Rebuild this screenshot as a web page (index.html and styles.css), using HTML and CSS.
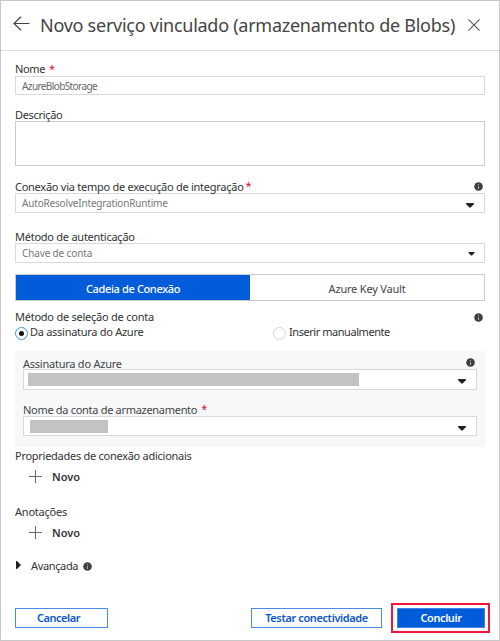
FILE: index.html
```html
<!DOCTYPE html>
<html lang="pt">
<head>
<meta charset="utf-8">
<title>Novo serviço vinculado</title>
<link rel="stylesheet" href="styles.css">
</head>
<body>
<svg width="0" height="0" class="defs">
  <symbol id="info" viewBox="0 0 9 9"><circle cx="4.5" cy="4.5" r="4.3" fill="#3f3f3f"/><path d="M4 4h1v3H4zM4 2h1v1H4z" fill="#aaa"/></symbol>
  <symbol id="caret" viewBox="0 0 8 5"><path d="M0 0h8v1L4.6 4.5H3.4L0 1z" fill="#222"/></symbol>
  <symbol id="plus" viewBox="0 0 13 13"><path d="M6.5 0v13M0 6.5h13" stroke="#666" fill="none"/></symbol>
</svg>
<main class="dialog">
  <header class="header">
    <svg class="back" viewBox="0 0 17 15"><path d="M16.5 7.5H1M8 .7L1 7.5l7 6.8" fill="none" stroke="#444" stroke-width="1.2"/></svg>
    <h1 class="title"><span class="t-title">Novo serviço vinculado (armazenamento de Blobs)</span></h1>
    <svg class="close" viewBox="0 0 12 12"><path d="M.4.4l11.2 11.2M11.6.4L.4 11.6" fill="none" stroke="#555" stroke-width="1.1"/></svg>
  </header>
  <div class="content">
    <div class="label first"><span class="t-nome">Nome</span><b class="req">*</b></div>
    <div class="box name"><span class="t-blob">AzureBlobStorage</span></div>
    <div class="label desc"><span class="t-desc">Descrição</span></div>
    <div class="box area"></div>
    <div class="label conn"><span class="t-conn">Conexão via tempo de execução de integração</span><b class="req near">*</b><svg class="info"><use href="#info"/></svg></div>
    <div class="box"><span class="t-auto">AutoResolveIntegrationRuntime</span><svg class="caret low"><use href="#caret"/></svg></div>
    <div class="label auth"><span class="t-auth">Método de autenticação</span></div>
    <div class="box"><span class="t-chave">Chave de conta</span><svg class="caret small" viewBox="0 0 8 5"><use href="#caret" width="8" height="5"/></svg></div>
    <div class="tabs">
      <div class="tab active"><span class="t-cadeia">Cadeia de Conexão</span></div>
      <div class="tab"><span class="t-vault">Azure Key Vault</span></div>
    </div>
    <div class="label select"><span class="t-sel">Método de seleção de conta</span><svg class="info"><use href="#info"/></svg></div>
    <div class="radios">
      <div class="choice"><i class="radio on"></i><span class="t-da">Da assinatura do Azure</span></div>
      <div class="choice"><i class="radio"></i><span class="t-inserir">Inserir manualmente</span></div>
    </div>
    <section class="group">
      <div class="label sub"><span class="t-assin">Assinatura do Azure</span><svg class="info"><use href="#info"/></svg></div>
      <div class="box tall"><i class="mask long"></i><svg class="caret low"><use href="#caret"/></svg></div>
      <div class="label account"><span class="t-conta">Nome da conta de armazenamento</span><b class="req">*</b></div>
      <div class="box"><i class="mask short"></i><svg class="caret mid"><use href="#caret"/></svg></div>
    </section>
    <div class="label props"><span class="t-props">Propriedades de conexão adicionais</span></div>
    <div class="add"><svg class="plus"><use href="#plus"/></svg><span class="t-novo">Novo</span></div>
    <div class="label notes"><span class="t-anot">Anotações</span></div>
    <div class="add tight"><svg class="plus"><use href="#plus"/></svg><span class="t-novo">Novo</span></div>
    <div class="label advanced"><svg class="expand" viewBox="0 0 5 8"><path d="M0 0h1l4 4-4 4H0z" fill="#222"/></svg><span class="t-avan">Avançada</span><svg class="info inline"><use href="#info"/></svg></div>
  </div>
  <footer class="footer">
    <button class="btn cancel"><span class="t-cancel">Cancelar</span></button>
    <button class="btn test"><span class="t-test">Testar conectividade</span></button>
    <div class="highlight"><button class="btn primary"><span class="t-concluir">Concluir</span></button></div>
  </footer>
</main>
</body>
</html>
```
FILE: styles.css
```css
* { box-sizing: border-box; }
body { margin: 0; background: #fff; font-family: "Noto Sans", "Open Sans", sans-serif; font-size: 11px; color: #333; }
.defs { position: absolute; }
svg { display: block; flex: none; }
span { white-space: nowrap; }
.dialog { width: 500px; height: 641px; border: 1px solid #c8c8c8; display: flex; flex-direction: column; }
.header { height: 50px; flex: none; border-bottom: 1px solid #ddd; display: flex; align-items: center; padding: 0 19px 2px 12px; }
.back { width: 17px; height: 15px; margin-top: -2px; }
.title { flex: 1; margin: 0 0 0 10px; font-size: 18px; line-height: 24px; font-weight: 400; color: #444; }
.close { width: 12px; height: 12px; }
.content { padding: 0 14px; flex: 1; }
.label { display: flex; align-items: center; height: 14px; line-height: 14px; }
.first { margin-top: 11px; }
.desc { margin-top: 12px; }
.conn { margin-top: 13px; }
.auth { margin-top: 16px; }
.desc span, .conn span, .auth span, .account span, .props span { margin-top: 2px; }
.sub span { margin-top: 3px; }
.req { color: #d0142c; font-weight: 400; margin-left: 4px; }
.near { margin-left: 2px; }
.info { width: 9px; height: 9px; margin: 0 2px 0 auto; }
.info.inline { margin: 0 0 0 5px; }
.box { height: 20px; border: 1px solid #d9d9d9; background: #fff; display: flex; align-items: center; padding: 0 10px 0 6px; font-size: 10px; line-height: 14px; color: #777; }
.box.name { height: 19px; color: #666; }
.box.area { height: 45px; border-color: #ccc; }
.box.tall { height: 21px; }
.caret { width: 8px; height: 5px; margin-left: auto; }
.caret.low { margin-top: 4px; }
.caret.mid { margin-top: 5px; }
.caret.small { width: 7px; height: 4px; margin-top: 2px; margin-right: -1px; }
.tabs { display: flex; height: 27px; margin-top: 11px; border: 1px solid #ccc; }
.tab { flex: 1; display: flex; align-items: center; justify-content: center; padding-top: 2px; color: #444; }
.active { background: #015cda; color: #fff; font-weight: 500; }
.select { margin-top: 9px; }
.radios { display: flex; height: 15px; margin-top: 1px; }
.choice { width: 258px; flex: none; display: flex; align-items: center; gap: 2px; line-height: 14px; }
.choice span { margin-top: -2px; }
.choice + .choice { width: auto; gap: 3px; }
.radio { width: 13px; height: 13px; flex: none; border: 1px solid #d5d5d5; border-radius: 50%; margin-top: 2px; display: flex; align-items: center; justify-content: center; }
.on { border-color: #3a96dd; }
.on::after { content: ""; width: 5px; height: 5px; border-radius: 50%; background: #111; }
.group { margin-top: 11px; height: 96px; background: #f7f8fa; padding: 4px 8px 0; color: #444; }
.account { margin-top: 12px; }
.mask { height: 13px; background: #c3c3c3; flex: none; }
.long { width: 331px; margin-left: -2px; margin-top: -1px; }
.short { width: 78px; }
.props { margin-top: 1px; }
.add { display: flex; align-items: center; height: 16px; margin-top: 6px; padding-left: 14px; gap: 10px; font-weight: 600; }
.add.tight { margin-top: 5px; }
.plus { width: 13px; height: 13px; }
.notes { margin-top: 21px; }
.advanced { margin-top: 19px; }
.expand { width: 5px; height: 8px; margin: 0 10px 2px 1px; }
.footer { flex: none; height: 37px; display: flex; align-items: flex-start; padding: 0 9px 0 14px; }
.btn { font: 600 11px/14px "Noto Sans", "Open Sans", sans-serif; height: 20px; padding: 0; background: #fff; border: 1px solid #4a8ae6; color: #0b55cf; display: flex; justify-content: center; align-items: center; margin-top: 5px; }
.cancel { width: 93px; padding-right: 6px; }
.test { width: 131px; margin-left: auto; }
.highlight { width: 99px; height: 30px; margin-left: 9px; border: 2px solid #f4143c; display: flex; justify-content: center; }
.primary { width: 88px; margin-top: 3px; margin-left: 1px; background: #015cda; border-color: #3f84e4; color: #fff; }

/* Tracking per label */
.t-title { letter-spacing: -.26px; }
.t-nome { letter-spacing: -.35px; }
.t-blob { letter-spacing: -.6px; }
.t-desc { letter-spacing: -.33px; }
.t-conn { letter-spacing: -.26px; }
.t-auto { letter-spacing: -.18px; }
.t-auth { letter-spacing: -.25px; }
.t-chave { letter-spacing: -.14px; }
.t-cadeia { letter-spacing: -.36px; }
.t-vault { letter-spacing: -.2px; }
.t-sel { letter-spacing: -.24px; }
.t-da { letter-spacing: -.28px; }
.t-inserir { letter-spacing: -.45px; }
.t-assin { letter-spacing: -.24px; }
.t-conta { letter-spacing: -.3px; }
.t-props { letter-spacing: -.27px; }
.t-anot { letter-spacing: -.22px; }
.t-avan { letter-spacing: -.35px; }
.t-cancel { letter-spacing: -.48px; }
.t-test { letter-spacing: -.4px; }
.t-concluir { letter-spacing: -.4px; }
```
